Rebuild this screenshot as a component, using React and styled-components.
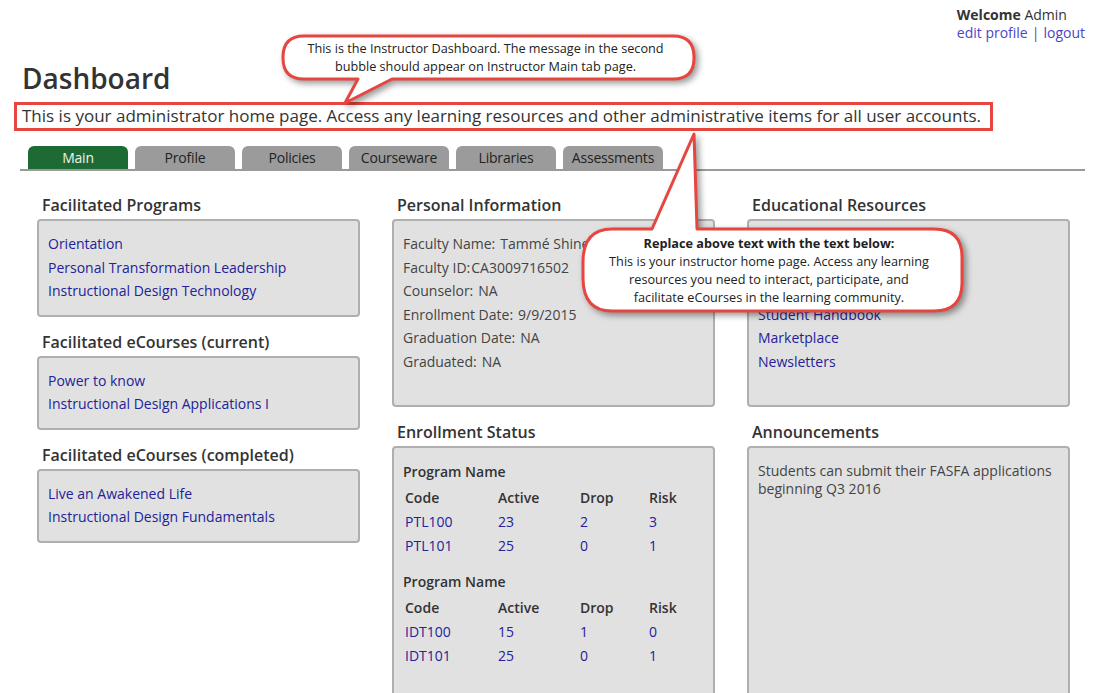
import React from "react";
import styled, { createGlobalStyle } from "styled-components";

const GlobalStyle = createGlobalStyle`
    html, body {
        margin: 0;
        padding: 0;
        background: #ffffff;
    }
    body {
        font-family: "Open Sans", "Noto Sans", "Liberation Sans", sans-serif;
        color: #333333;
    }
    * {
        box-sizing: border-box;
    }
`;

const RED = "#e6463f";
const LINK = "#23229a";

const Page = styled.div`
    position: relative;
    width: 1105px;
    height: 693px;
    overflow: hidden;
    padding: 0 20px 0 14px;
`;

const TopBar = styled.div`
    display: flex;
    justify-content: flex-end;
    padding-top: 6px;
`;

const Welcome = styled.div`
    white-space: nowrap;
    font-size: 14px;
    line-height: 18px;
    color: #333;

    b {
        font-weight: 700;
    }
`;

const TopLink = styled.a`
    color: #4a45c8;
    text-decoration: none;
`;

const Sep = styled.span`
    color: #4a45c8;
    margin: 0 4px;
`;

const Title = styled.h1`
    margin: 19px 0 0 8px;
    font-size: 28px;
    line-height: 34px;
    font-weight: 600;
    color: #333;
`;

const Intro = styled.p`
    display: inline-block;
    margin: 7px 0 0 0;
    padding: 0 9px 1px 5px;
    border: 3px solid ${RED};
    font-size: 17px;
    line-height: 22px;
    color: #333;
`;

const TabBar = styled.div`
    display: flex;
    gap: 7px;
    margin: 15px 0 0 14px;
`;

const Tab = styled.div`
    width: 100px;
    height: 23px;
    border-radius: 6px 6px 0 0;
    background: ${(p) => (p.$active ? "#1e6a34" : "#9b9b9b")};
    color: ${(p) => (p.$active ? "#eef4ee" : "#222")};
    font-size: 14px;
    line-height: 23px;
    text-align: center;
    letter-spacing: -0.2px;
`;

const Rule = styled.div`
    height: 2px;
    margin-left: 6px;
    background: #9a9a9a;
`;

const Columns = styled.div`
    display: grid;
    grid-template-columns: repeat(3, 323px);
    column-gap: 32px;
    margin-left: 23px;
    padding-top: 23px;
`;

const Column = styled.div`
    display: flex;
    flex-direction: column;
`;

const Heading = styled.h2`
    margin: ${(p) => (p.$first ? "0" : "14px")} 0 3px 5px;
    font-size: 16px;
    line-height: 22px;
    font-weight: 600;
    color: #333;
`;

const Box = styled.div`
    min-height: ${(p) => p.$minHeight || 0}px;
    padding: 11px 10px 12px 9px;
    background: #e1e1e1;
    border: 2px solid #afafaf;
    border-radius: 4px;
    font-size: 14px;
    line-height: 23.5px;
    color: #444;
`;

const ItemLink = styled.a`
    display: block;
    color: ${LINK};
    text-decoration: none;
`;

const InfoRow = styled.div`
    span + span {
        margin-left: ${(p) => (p.$tight ? 1 : 5)}px;
    }
`;

const Group = styled.div`
    margin-top: ${(p) => (p.$first ? "1px" : "12px")};
`;

const GroupTitle = styled.div`
    font-weight: 600;
    color: #333;
    line-height: 24px;
    margin-bottom: 2px;
`;

const Row = styled.div`
    display: grid;
    grid-template-columns: 93px 82px 69px 60px;
    padding-left: 2px;
    line-height: 24px;
    font-weight: ${(p) => (p.$head ? 600 : 400)};
    color: ${(p) => (p.$head ? "#333" : LINK)};
`;

const Note = styled.p`
    margin: 3px 0 0 0;
    line-height: 18px;
    color: #444;
`;

const Callout = styled.div`
    position: absolute;
    left: ${(p) => p.$left}px;
    top: ${(p) => p.$top}px;
    width: ${(p) => p.$width}px;
    height: ${(p) => p.$height}px;

    svg {
        position: absolute;
        inset: 0;
        overflow: visible;
        filter: drop-shadow(3px 3px 3px rgba(0, 0, 0, 0.4));
    }
`;

const CalloutText = styled.div`
    position: absolute;
    left: 0;
    right: 10px;
    top: ${(p) => p.$top}px;
    text-align: center;
    font-size: 12.7px;
    line-height: 18px;
    color: #222;

    b {
        font-weight: 700;
    }
`;

const tabs = ["Main", "Profile", "Policies", "Courseware", "Libraries", "Assessments"];

const programs = [
    {
        rows: [
            ["PTL100", "23", "2", "3"],
            ["PTL101", "25", "0", "1"],
        ],
    },
    {
        rows: [
            ["IDT100", "15", "1", "0"],
            ["IDT101", "25", "0", "1"],
        ],
    },
];

const personal = [
    ["Faculty Name:", "Tammé Shine"],
    ["Faculty ID:", "CA3009716502"],
    ["Counselor:", "NA"],
    ["Enrollment Date:", "9/9/2015"],
    ["Graduation Date:", "NA"],
    ["Graduated:", "NA"],
];

const LinkList = ({ items }) => (
    <>
        {items.map((t) => (
            <ItemLink key={t} href="#">
                {t}
            </ItemLink>
        ))}
    </>
);

export default function App() {
    return (
        <>
            <GlobalStyle />
            <Page>
                <TopBar>
                    <Welcome>
                        <div>
                            <b>Welcome</b> Admin
                        </div>
                        <div>
                            <TopLink href="#">edit profile</TopLink>
                            <Sep>|</Sep>
                            <TopLink href="#">logout</TopLink>
                        </div>
                    </Welcome>
                </TopBar>

                <Title>Dashboard</Title>
                <Intro>
                    This is your administrator home page. Access any learning resources and other
                    administrative items for all user accounts.
                </Intro>

                <TabBar>
                    {tabs.map((t, i) => (
                        <Tab key={t} $active={i === 0}>
                            {t}
                        </Tab>
                    ))}
                </TabBar>
                <Rule />

                <Columns>
                    <Column>
                        <Heading $first>Facilitated Programs</Heading>
                        <Box>
                            <LinkList
                                items={[
                                    "Orientation",
                                    "Personal Transformation Leadership",
                                    "Instructional Design Technology",
                                ]}
                            />
                        </Box>
                        <Heading>Facilitated eCourses (current)</Heading>
                        <Box>
                            <LinkList items={["Power to know", "Instructional Design Applications I"]} />
                        </Box>
                        <Heading>Facilitated eCourses (completed)</Heading>
                        <Box>
                            <LinkList
                                items={["Live an Awakened Life", "Instructional Design Fundamentals"]}
                            />
                        </Box>
                    </Column>

                    <Column>
                        <Heading $first>Personal Information</Heading>
                        <Box $minHeight={188}>
                            {personal.map(([k, v]) => (
                                <InfoRow key={k} $tight={k === "Faculty ID:"}>
                                    <span>{k}</span>
                                    <span>{v}</span>
                                </InfoRow>
                            ))}
                        </Box>
                        <Heading>Enrollment Status</Heading>
                        <Box $minHeight={260}>
                            {programs.map((p, i) => (
                                <Group key={i} $first={i === 0}>
                                    <GroupTitle>Program Name</GroupTitle>
                                    <Row $head>
                                        <span>Code</span>
                                        <span>Active</span>
                                        <span>Drop</span>
                                        <span>Risk</span>
                                    </Row>
                                    {p.rows.map((r) => (
                                        <Row key={r[0]}>
                                            {r.map((c, j) => (
                                                <span key={j}>{c}</span>
                                            ))}
                                        </Row>
                                    ))}
                                </Group>
                            ))}
                        </Box>
                    </Column>

                    <Column>
                        <Heading $first>Educational Resources</Heading>
                        <Box $minHeight={188}>
                            <LinkList
                                items={[
                                    "Catalog",
                                    "Library",
                                    "Academic Calendar",
                                    "Student Handbook",
                                    "Marketplace",
                                    "Newsletters",
                                ]}
                            />
                        </Box>
                        <Heading>Announcements</Heading>
                        <Box $minHeight={260}>
                            <Note>Students can submit their FASFA applications beginning Q3 2016</Note>
                        </Box>
                    </Column>
                </Columns>

                {/* annotation bubble 1 */}
                <Callout $left={278} $top={30} $width={425} $height={80}>
                    <svg width="425" height="80" viewBox="0 0 425 80">
                        <path
                            d="M 26 6 L 395 6 Q 416 6 416 27 L 416 28 Q 416 49 395 49 L 114 49 L 67 73 L 80 49 L 26 49 Q 5 49 5 28 L 5 27 Q 5 6 26 6 Z"
                            fill="#fff"
                            stroke={RED}
                            strokeWidth="3"
                            strokeLinejoin="round"
                        />
                    </svg>
                    <CalloutText $top={9}>
                        This is the Instructor Dashboard. The message in the second
                        <br />
                        bubble should appear on Instructor Main tab page.
                    </CalloutText>
                </Callout>

                {/* annotation bubble 2 */}
                <Callout $left={578} $top={128} $width={392} $height={190}>
                    <svg width="392" height="190" viewBox="0 0 392 190">
                        <path
                            d="M 34 101 L 74 101 L 116 6 L 119 101 L 356 101 Q 384 101 384 129 L 384 155 Q 384 183 356 183 L 34 183 Q 5 183 5 150 L 5 134 Q 5 101 34 101 Z"
                            fill="#fff"
                            stroke={RED}
                            strokeWidth="3"
                            strokeLinejoin="round"
                        />
                    </svg>
                    <CalloutText $top={106}>
                        <b>Replace above text with the text below:</b>
                        <br />
                        This is your instructor home page. Access any learning
                        <br />
                        resources you need to interact, participate, and
                        <br />
                        facilitate eCourses in the learning community.
                    </CalloutText>
                </Callout>
            </Page>
        </>
    );
}
